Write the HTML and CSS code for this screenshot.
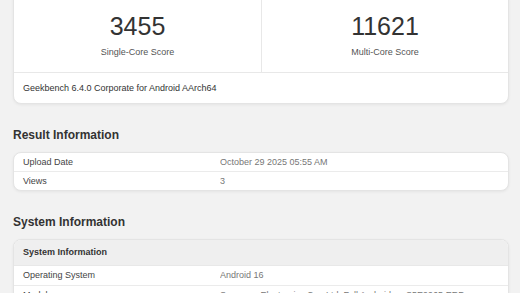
FILE: index.html
```html
<!DOCTYPE html>
<html lang="en">
<head>
  <meta charset="UTF-8">
  <meta name="viewport" content="width=device-width, initial-scale=1.0">
  <title>Geekbench Result</title>
  <link rel="stylesheet" href="styles.css">
</head>
<body>
  <div class="page">
    <!-- Score Card -->
    <div class="card score-card">
      <div class="scores">
        <div class="score">
          <div class="score-value">3455</div>
          <div class="score-label">Single-Core Score</div>
        </div>
        <div class="score">
          <div class="score-value">11621</div>
          <div class="score-label">Multi-Core Score</div>
        </div>
      </div>
      <div class="score-footer">Geekbench 6.4.0 Corporate for Android AArch64</div>
    </div>

    <!-- Result Information -->
    <h2>Result Information</h2>
    <div class="card table">
      <div class="row">
        <div class="name">Upload Date</div>
        <div class="value">October 29 2025 05:55 AM</div>
      </div>
      <div class="row">
        <div class="name">Views</div>
        <div class="value">3</div>
      </div>
    </div>

    <!-- System Information -->
    <h2>System Information</h2>
    <div class="card table">
      <div class="table-head">System Information</div>
      <div class="row tall">
        <div class="name">Operating System</div>
        <div class="value">Android 16</div>
      </div>
      <div class="row tall">
        <div class="name">Model</div>
        <div class="value">Samsung Electronics Co., Ltd. Full Android on S5E9965 ERD</div>
      </div>
    </div>
  </div>
</body>
</html>
```

FILE: styles.css
```css
/* General Styles */
body {
  font-family: "Liberation Sans", Arial, sans-serif;
  margin: 0;
  padding: 0;
  background-color: #f2f2f2;
  color: #333;
  overflow: hidden;
}

.page {
  margin: 0 11px 0 13px;
}

.card {
  background: #fff;
  border: 1px solid #e4e4e4;
  border-radius: 8px;
  box-shadow: 0 1px 3px rgba(0, 0, 0, 0.06);
  overflow: hidden;
}

/* Score Card */
.score-card {
  margin-top: -9px;
}

.scores {
  display: grid;
  grid-template-columns: 1fr 1fr;
}

.score {
  text-align: center;
  padding: 19px 0 14px;
}

.score + .score {
  border-left: 1px solid #e8e8e8;
}

.score-value {
  font-size: 25px;
  line-height: 30px;
  color: #333;
}

.score-label {
  margin-top: 5px;
  font-size: 9px;
  line-height: 12px;
  color: #555;
}

.score-footer {
  border-top: 1px solid #e8e8e8;
  padding: 0 9px;
  font-size: 9px;
  line-height: 30px;
  color: #333;
}

/* Headings */
h2 {
  margin: 23px 0 9px;
  font-size: 12px;
  line-height: 16px;
  font-weight: bold;
  color: #333;
}

/* Tables */
.table-head {
  background: #efefef;
  padding: 0 9px;
  font-size: 9px;
  line-height: 25px;
  font-weight: bold;
  color: #333;
  border-bottom: 1px solid #e8e8e8;
}

.row {
  display: grid;
  grid-template-columns: 197px 1fr;
  padding: 0 9px;
  font-size: 9px;
  line-height: 18px;
  white-space: nowrap;
}

.row.tall {
  line-height: 19px;
}

.row + .row {
  border-top: 1px solid #ebebeb;
}

.name {
  color: #444;
}

.value {
  color: #777;
  overflow: hidden;
}
```
